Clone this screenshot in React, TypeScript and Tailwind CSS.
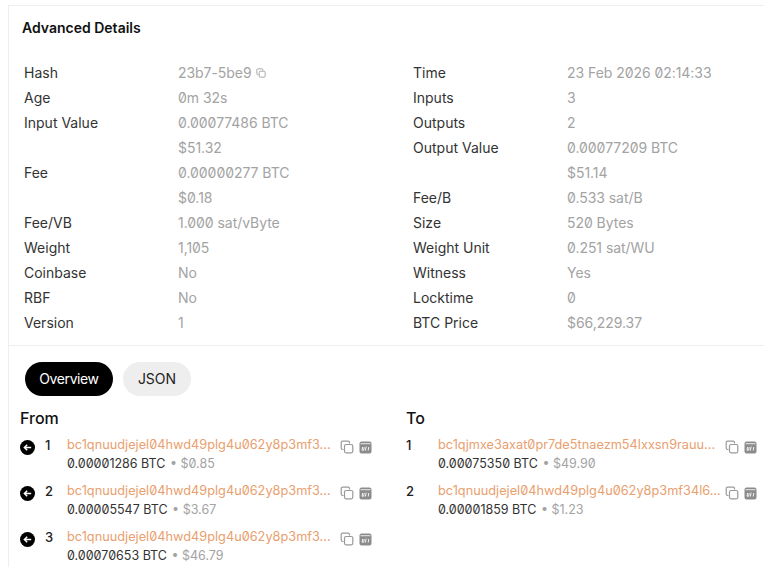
const left: [string, string, boolean?][] = [
  ["Hash", "23b7-5be9", true],
  ["Age", "0m 32s"],
  ["Input Value", "0.00077486 BTC"],
  ["", "$51.32"],
  ["Fee", "0.00000277 BTC"],
  ["", "$0.18"],
  ["Fee/VB", "1.000 sat/vByte"],
  ["Weight", "1,105"],
  ["Coinbase", "No"],
  ["RBF", "No"],
  ["Version", "1"],
];

const right: [string, string][] = [
  ["Time", "23 Feb 2026 02:14:33"],
  ["Inputs", "3"],
  ["Outputs", "2"],
  ["Output Value", "0.00077209 BTC"],
  ["", "$51.14"],
  ["Fee/B", "0.533 sat/B"],
  ["Size", "520 Bytes"],
  ["Weight Unit", "0.251 sat/WU"],
  ["Witness", "Yes"],
  ["Locktime", "0"],
  ["BTC Price", "$66,229.37"],
];

const inputs = [
  { address: "bc1qnuudjejel04hwd49plg4u062y8p3mf3...", btc: "0.00001286", usd: "$0.85" },
  { address: "bc1qnuudjejel04hwd49plg4u062y8p3mf3...", btc: "0.00005547", usd: "$3.67" },
  { address: "bc1qnuudjejel04hwd49plg4u062y8p3mf3...", btc: "0.00070653", usd: "$46.79" },
];

const outputs = [
  { address: "bc1qjmxe3axat0pr7de5tnaezm54lxxsn9rauu...", btc: "0.00075350", usd: "$49.90" },
  { address: "bc1qnuudjejel04hwd49plg4u062y8p3mf34l6...", btc: "0.00001859", usd: "$1.23" },
];

function CopyIcon({ size = 14 }: { size?: number }) {
  return (
    <svg width={size} height={size} viewBox="0 0 14 14" fill="none" stroke="#9a9a9a" strokeWidth="1.2">
      <path d="M9.5 3.5V2.6c0-.9-.5-1.4-1.4-1.4H2.6c-.9 0-1.4.5-1.4 1.4v5.5c0 .9.5 1.4 1.4 1.4h.9" />
      <rect x="4.5" y="4.5" width="8.3" height="8.3" rx="1.5" />
    </svg>
  );
}

function CodeBoxIcon() {
  return (
    <svg width="13" height="13" viewBox="0 0 13 13" fill="none">
      <rect x="0.5" y="0.5" width="12" height="12" rx="2" fill="#8c8c8c" />
      <rect x="1.5" y="2.2" width="10" height="1" fill="#e8e8e8" />
      <path d="M3.6 6l-.5 3.2h1.6L5.2 6M7.2 5.6l-.9 4M9.8 6l-.6 3.4" stroke="#fff" strokeWidth="0.9" />
    </svg>
  );
}

function ArrowBadge() {
  return (
    <svg width="15" height="15" viewBox="0 0 15 15" className="shrink-0">
      <circle cx="7.5" cy="7.5" r="7.5" fill="#000" />
      <path d="M11.2 7.5H4.6M7.2 4.8L4.4 7.5l2.8 2.7" fill="none" stroke="#fff" strokeWidth="1.5" />
    </svg>
  );
}

function DetailColumn({ rows }: { rows: [string, string, boolean?][] }) {
  return (
    <div>
      {rows.map(([label, value, copy], i) => (
        <div key={i} className="flex h-[25px] items-center text-sm">
          <span className="w-[154px] text-[#333]">{label}</span>
          <span className="flex items-center gap-[4px] tracking-[-0.05px] text-[#a3a3a3] slashed-zero">
            {value}
            {copy && <CopyIcon size={10} />}
          </span>
        </div>
      ))}
    </div>
  );
}

function TransferRow({ n, address, btc, usd, arrow, numWidth }: {
  n: number;
  address: string;
  btc: string;
  usd: string;
  arrow?: boolean;
  numWidth: string;
}) {
  return (
    <div className="flex h-[46px]">
      {arrow && (
        <div className="mt-[4px] mr-[10px]">
          <ArrowBadge />
        </div>
      )}
      <span className={`${numWidth} text-[13px] leading-[18px] font-medium text-[#222]`}>{n}</span>
      <div className="flex-1">
        <div className="flex items-center justify-between">
          <span className="text-[12.75px] leading-[18px] text-[#e9a06f] slashed-zero">{address}</span>
          <span className="mt-[4px] flex items-center gap-[5px]">
            <CopyIcon />
            <CodeBoxIcon />
          </span>
        </div>
        <div className="mt-[1px] text-[12.5px] leading-[18px] text-[#333] slashed-zero">
          {btc} BTC <span className="ml-[1px] text-[#a3a3a3]">•</span> <span className="text-[#a3a3a3]">{usd}</span>
        </div>
      </div>
    </div>
  );
}

export default function App() {
  return (
    <div className="h-[567px] w-[764px] overflow-hidden bg-white pl-2 font-['Inter',sans-serif]">
      <div className="mt-[5px] border-t border-l border-[#eeeeee] pb-[10px] pl-[13px]">
        <h2 className="pt-[13px] text-sm leading-[18px] font-semibold text-[#111]">Advanced Details</h2>
        <div className="mt-[23px] grid grid-cols-[389px_1fr] pl-[2px]">
          <DetailColumn rows={left} />
          <DetailColumn rows={right} />
        </div>
      </div>
      <div className="border-t border-l border-[#eeeeee] pl-[11px]">
        <div className="flex gap-[10px] px-[5px] pt-4">
          <button className="h-[34px] w-[88px] rounded-full bg-black text-sm tracking-[-0.4px] text-white">Overview</button>
          <button className="h-[34px] w-[68px] rounded-full bg-[#eeeeee] text-sm text-[#222]">JSON</button>
        </div>
        <div className="mt-[13px] grid grid-cols-[386px_1fr]">
          <div className="pr-[34px]">
            <h3 className="text-base leading-[18px] font-medium text-[#111]">From</h3>
            <div className="mt-[9px]">
              {inputs.map((t, i) => (
                <TransferRow key={i} n={i + 1} {...t} arrow numWidth="w-[22px]" />
              ))}
            </div>
          </div>
          <div className="pr-[7px]">
            <h3 className="text-base leading-[18px] font-medium text-[#111]">To</h3>
            <div className="mt-[9px]">
              {outputs.map((t, i) => (
                <TransferRow key={i} n={i + 1} {...t} numWidth="w-[32px]" />
              ))}
            </div>
          </div>
        </div>
      </div>
    </div>
  );
}
